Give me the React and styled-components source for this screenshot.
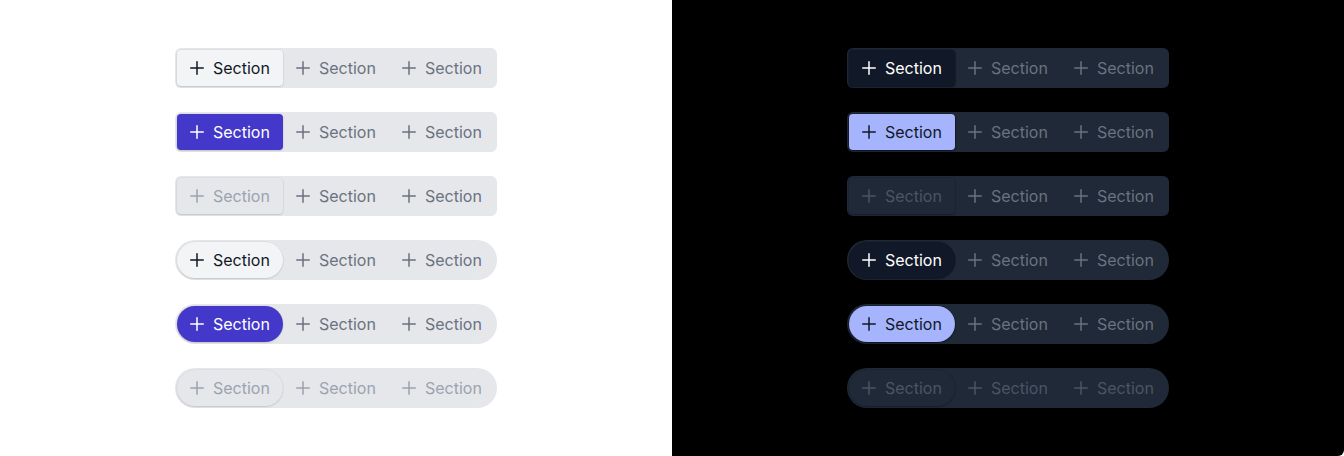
import React from 'react'
import styled, { createGlobalStyle, css } from 'styled-components'

const GlobalStyle = createGlobalStyle`
    html, body {
        margin: 0;
        padding: 0;
        background: #ffffff;
    }
    body {
        font-family: Inter, "Noto Sans", sans-serif;
        -webkit-font-smoothing: antialiased;
    }
`;

const palettes = {
    light: {
        panel: '#ffffff',
        track: '#e5e7eb',
        idle: '#6b7280',
        muted: '#9ca3af',
        normal: { bg: '#f3f4f6', fg: '#111827' },
        primary: { bg: '#4338ca', fg: '#ffffff' },
        disabled: { bg: '#e5e7eb', fg: '#9ca3af' },
        shadow: '0 1px 2px rgba(0, 0, 0, 0.12), 0 0 0 0.5px rgba(0, 0, 0, 0.06)',
        softShadow: '0 1px 2px rgba(0, 0, 0, 0.12), 0 0 0 0.5px rgba(0, 0, 0, 0.06)',
    },
    dark: {
        panel: '#000000',
        track: '#1f2937',
        idle: '#6b7280',
        muted: '#4b5563',
        normal: { bg: '#111827', fg: '#ffffff' },
        primary: { bg: '#a5b4fc', fg: '#111827' },
        disabled: { bg: '#1f2937', fg: '#4b5563' },
        shadow: '0 1px 2px rgba(0, 0, 0, 0.4), 0 0 0 0.5px rgba(0, 0, 0, 0.35)',
        softShadow: '0 1px 2px rgba(0, 0, 0, 0.2), 0 0 0 0.5px rgba(0, 0, 0, 0.15)',
    },
};

const rows = [
    { variant: 'normal', pill: false, allDisabled: false },
    { variant: 'primary', pill: false, allDisabled: false },
    { variant: 'disabled', pill: false, allDisabled: false },
    { variant: 'normal', pill: true, allDisabled: false },
    { variant: 'primary', pill: true, allDisabled: false },
    { variant: 'disabled', pill: true, allDisabled: true },
];

function PlusIcon() {
    return (
        <svg width="16" height="16" viewBox="0 0 16 16" fill="none" aria-hidden="true">
            <path d="M8 1.75v12.5M1.75 8h12.5" stroke="currentColor" strokeWidth="1.5" strokeLinecap="round" />
        </svg>
    )
}

function SegmentRow({ mode, variant, pill, allDisabled }) {
    const p = palettes[mode];
    return (
        <Track $bg={p.track} $pill={pill}>
            <Segment
                $active
                $pill={pill}
                $bg={p[variant].bg}
                $fg={p[variant].fg}
                $shadow={variant === 'disabled' ? p.softShadow : p.shadow}
            >
                <PlusIcon />
                <span>Section</span>
            </Segment>
            {[0, 1].map((i) => (
                <Segment key={i} $pill={pill} $fg={allDisabled ? p.muted : p.idle}>
                    <PlusIcon />
                    <span>Section</span>
                </Segment>
            ))}
        </Track>
    )
}

export default function App() {
    return (
        <>
            <GlobalStyle />
            <Page>
                {['light', 'dark'].map((mode) => (
                    <Panel key={mode} $mode={mode} $bg={palettes[mode].panel}>
                        {rows.map((r, i) => (
                            <SegmentRow key={i} mode={mode} {...r} />
                        ))}
                    </Panel>
                ))}
            </Page>
        </>
    )
}

const Page = styled.div`
    display: grid;
    grid-template-columns: 1fr 1fr;
    width: 1344px;
    height: 456px;
`;

const Panel = styled.div`
    background: ${(p) => p.$bg};
    display: flex;
    flex-direction: column;
    align-items: center;
    justify-content: center;
    gap: 24px;
    ${(p) => p.$mode === 'dark' && css`
        border-bottom-right-radius: 6px;
    `}
`;

const Track = styled.div`
    display: flex;
    align-items: center;
    padding: 2px;
    background: ${(p) => p.$bg};
    border-radius: ${(p) => (p.$pill ? '9999px' : '6px')};
`;

const Segment = styled.div`
    display: flex;
    align-items: center;
    gap: 8px;
    box-sizing: border-box;
    width: 106px;
    height: 36px;
    padding: 0 12px;
    font-size: 16px;
    font-weight: 400;
    line-height: 20px;
    color: ${(p) => p.$fg};
    border-radius: ${(p) => (p.$pill ? '9999px' : '4px')};
    background: ${(p) => (p.$active ? p.$bg : 'transparent')};
    box-shadow: ${(p) => (p.$active ? p.$shadow : 'none')};

    svg {
        flex-shrink: 0;
    }
`;
